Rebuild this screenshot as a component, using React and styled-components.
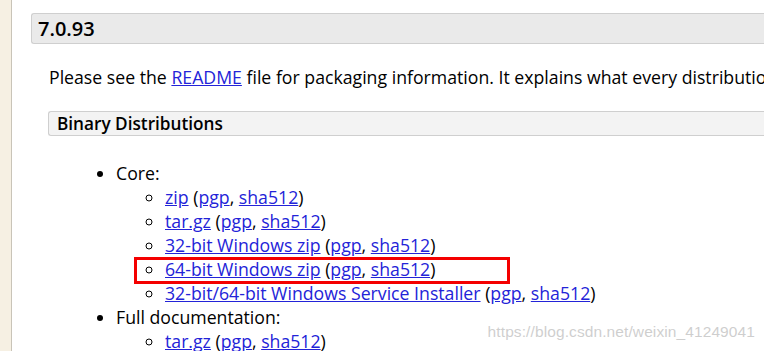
import React from "react";
import styled, { createGlobalStyle } from "styled-components";

const GlobalStyle = createGlobalStyle`
  html, body {
    margin: 0;
    padding: 0;
    background: #fff;
    overflow: hidden;
  }
  body {
    font-family: "Open Sans", "Noto Sans", sans-serif;
    color: #000;
    width: 764px;
    height: 351px;
  }
`;

const links = [
  { label: "zip" },
  { label: "tar.gz" },
  { label: "32-bit Windows zip" },
  { label: "64-bit Windows zip", marked: true },
  { label: "32-bit/64-bit Windows Service Installer" },
];

export default function App() {
  return (
    <>
      <GlobalStyle />
      <Pagina>
        <BarraLateral />
        <Contenido>
          <Version>7.0.93</Version>
          <Parrafo>
            Please see the <Enlace href="#">README</Enlace> file for packaging
            information. It explains what every distribution contains.
          </Parrafo>
          <Seccion>Binary Distributions</Seccion>
          <Lista>
            <li>
              Core:
              <SubLista>
                {links.map((l) => (
                  <Item key={l.label}>
                    <Enlace href="#">{l.label}</Enlace> (
                    <Enlace href="#">pgp</Enlace>,{" "}
                    <Enlace href="#">sha512</Enlace>)
                    {l.marked && <Marco />}
                  </Item>
                ))}
              </SubLista>
            </li>
            <li>
              Full documentation:
              <SubLista>
                <Item>
                  <Enlace href="#">tar.gz</Enlace> (<Enlace href="#">pgp</Enlace>
                  , <Enlace href="#">sha512</Enlace>)
                </Item>
              </SubLista>
            </li>
          </Lista>
        </Contenido>
        <MarcaAgua>https://blog.csdn.net/weixin_41249041</MarcaAgua>
      </Pagina>
    </>
  );
}

const Pagina = styled.div`
  position: relative;
  display: flex;
  width: 764px;
  height: 351px;
  overflow: hidden;
`;

const BarraLateral = styled.div`
  flex: 0 0 11px;
  background: #f6f0e3;
  border-right: 1px solid #c9c4b8;
`;

const Contenido = styled.div`
  flex: 1;
  min-width: 0;
  padding: 13px 0 0 19px;
  white-space: nowrap;
`;

const Version = styled.div`
  height: 29px;
  display: flex;
  align-items: center;
  padding-left: 6px;
  background: #eaeaea;
  border: 1px solid #cfcfcf;
  border-right: none;
  border-radius: 3px 0 0 3px;
  font-size: 20px;
  font-weight: 600;
  margin-right: -10px;
`;

const Parrafo = styled.p`
  margin: 21px 0 0 18px;
  font-size: 17.7px;
  line-height: 24px;
`;

const Seccion = styled.div`
  margin: 22px -10px 0 17px;
  height: 23px;
  display: flex;
  align-items: center;
  padding-left: 8px;
  background: #f3f3f3;
  border: 1px solid #cfcfcf;
  border-right: none;
  border-radius: 3px 0 0 3px;
  font-size: 17.2px;
  font-weight: 600;
`;

const Lista = styled.ul`
  margin: 25px 0 0 0;
  padding-left: 85px;
  list-style: disc;
  font-size: 17.7px;
  line-height: 24px;
`;

const SubLista = styled.ul`
  margin: 0;
  padding-left: 49px;
  list-style: circle;
`;

const Item = styled.li`
  position: relative;
`;

const Enlace = styled.a`
  color: #2323d8;
  text-decoration: underline;
`;

const Marco = styled.span`
  position: absolute;
  left: -31px;
  top: 0;
  width: 370px;
  height: 21px;
  border: 3px solid #f40000;
  pointer-events: none;
`;

const MarcaAgua = styled.div`
  position: absolute;
  right: 9px;
  bottom: 10px;
  font-family: "Liberation Sans", Arial, sans-serif;
  font-size: 15.5px;
  color: rgba(190, 190, 190, 0.75);
  letter-spacing: 0.1px;
`;
